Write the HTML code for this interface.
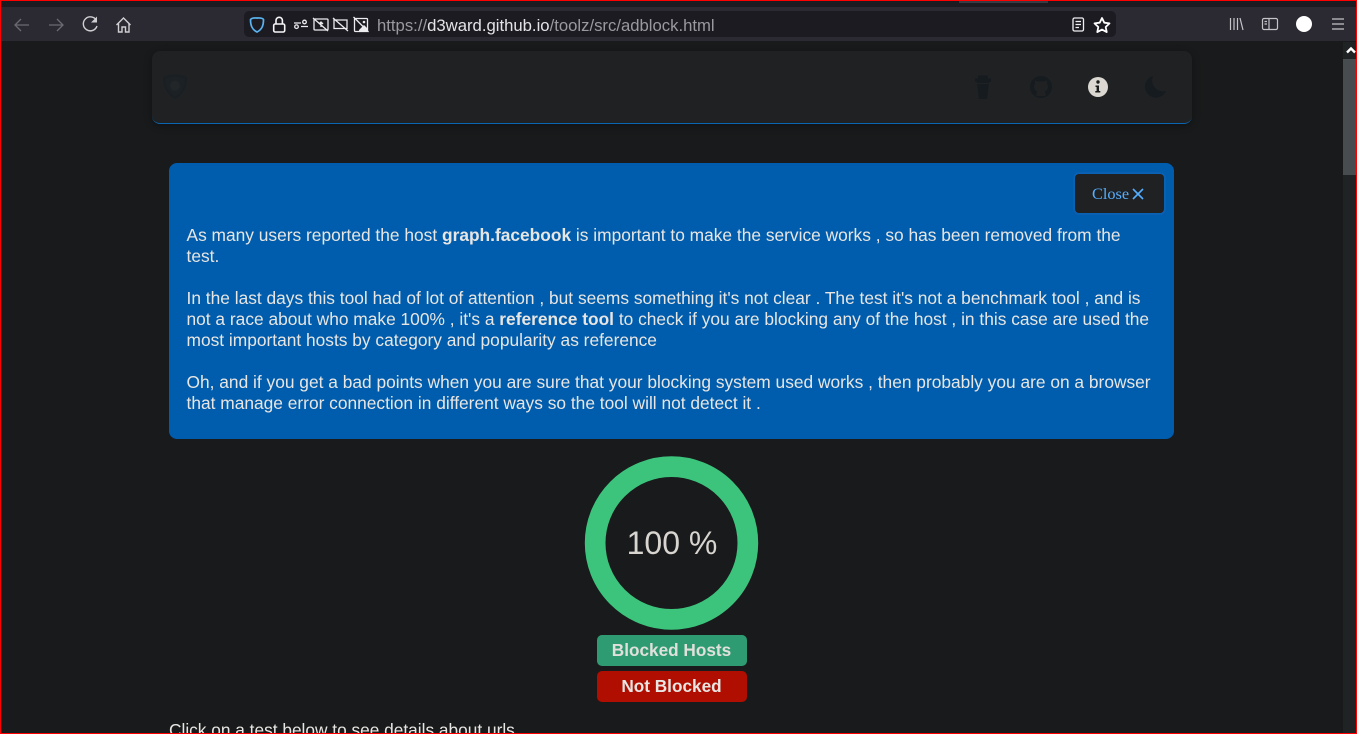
<!DOCTYPE html>
<html><head><meta charset="utf-8"><style>
*{box-sizing:border-box}
html,body{margin:0;padding:0;width:1357px;height:734px;overflow:hidden;background:#181a1b;font-family:"Liberation Sans",sans-serif;color:#e8e6e3}
#w{position:relative;width:1357px;height:734px;overflow:hidden;background:#181a1b}
.a{position:absolute}
svg{position:absolute;overflow:visible;fill:none}
p{margin:0;white-space:nowrap}
</style></head><body><div id="w">
<div class="a" style="left:0;top:0;width:1357px;height:7px;background:#1c1b22"></div>
<div class="a" style="left:959px;top:0;width:89px;height:3px;background:#3a3a44"></div>
<div class="a" style="left:0;top:7px;width:1357px;height:34px;background:#2b2a33"></div>
<div class="a" style="left:244px;top:11px;width:872px;height:26px;background:#1c1b22;border-radius:5px"></div>
<div class="a" style="left:377px;top:17px;font-size:16.7px;line-height:18px;color:#9a99a0;white-space:nowrap">https://<span style="color:#e4e4e6">d3ward.github.io</span>/toolz/src/adblock.html</div>

<svg style="left:0;top:0" width="1357" height="50">
<g stroke="#6b6a71" stroke-width="1.3"><path d="M29 25H15M21 19l-6 6 6 6"/><path d="M49 25h14M57 19l6 6-6 6"/></g>
<g stroke="#d0d0d3" stroke-width="1.4"><path d="M96.500 20.500A7 7 0 1 0 97 26"/><path d="M97 16.500v6h-6z" fill="#d0d0d3" stroke="none"/><path d="M116.500 25l7-7 7 7M118.500 23.500V32h3.500v-5h3.500v5h3.500v-8.500"/></g>
<path d="M257 18c2 0 5-.5 6.500 1.500 0 6-1.500 10-6.500 12.500-5-2.500-6.500-6.500-6.500-12.500C252 17.500 255 18 257 18z" stroke="#5ab4f0" stroke-width="1.7"/>
<g stroke="#f6f6f7" stroke-width="1.6"><rect x="273.700" y="24" width="11" height="8" rx="1.500"/><path d="M276 24v-3.500a3.200 3.200 0 0 1 6.400 0V24"/></g>
<g stroke="#ececee" stroke-width="1.300"><path d="M294 23h7M301 26.500h7"/><circle cx="304.500" cy="22" r="1.800"/><circle cx="296.500" cy="26.700" r="1.800"/>
<rect x="314" y="19" width="14" height="11" rx="1"/><path d="M313 18l15 13M321 22v5M319 24l2-2 2 2"/>
<path d="M334 20h13v8.500h-13zM333 18l15 13"/>
<rect x="354.500" y="18.500" width="13" height="13" rx="1"/><path d="M353.500 17l15 15"/><path d="M359 30l5-5 3 3v3h-8z" fill="#ececee" stroke="none"/><circle cx="364" cy="22" r="1.300" fill="#ececee" stroke="none"/></g>
<g stroke="#f0f0f1" stroke-width="1.300"><rect x="1073" y="18" width="10.500" height="13" rx="1.500"/><path d="M1075.500 21.500h5.500M1075.500 24.500h5.500M1075.500 27.500h3.500"/></g>
<path d="M1102 18l2.300 4.700 5.200.7-3.800 3.600 1 5.100-4.700-2.500-4.700 2.500 1-5.100-3.800-3.600 5.200-.7z" stroke="#fff" stroke-width="1.800" stroke-linejoin="round"/>
<g stroke="#c4c4c8" stroke-width="1.200"><path d="M1230.500 18v12M1234 18v12M1237.500 18v12M1240 18l3 12"/><rect x="1262.500" y="18.500" width="15" height="11" rx="1.500"/><path d="M1269 18.500v11M1264.500 21.500h2.500M1264.500 24h2.500"/><path d="M1332 19h12M1332 24h12M1332 29h12" stroke-width="1.300"/></g>
<circle cx="1304" cy="24" r="8" fill="#fff"/>
</svg>

<!-- scrollbar -->
<div class="a" style="left:1343px;top:42px;width:13px;height:692px;background:#202324"></div>
<div class="a" style="left:1343px;top:59px;width:13px;height:116px;background:#474c4f"></div>
<svg style="left:1343px;top:42px" width="13" height="17"><path d="M4 10.500l4-4 4 4" stroke="#fff" stroke-width="2.400"/></svg>

<!-- nav -->
<div class="a" style="left:152px;top:51px;width:1040px;height:73px;background:#1f2123;border-radius:8px;border-bottom:1px solid #0a66b0;box-shadow:0 2px 8px rgba(0,0,0,.3)"></div>
<svg style="left:0;top:0" width="1357" height="130">
<path d="M175 75.500C179 75.500 183 76.500 186 78 186 86 183 93 175 98 167 93 164 86 164 78 167 76.500 171 75.500 175 75.500z" stroke="#1a1f24" stroke-width="2" fill="#1c2125"/><circle cx="175" cy="85.700" r="5" fill="#232629"/>
<path d="M978 75.500h10v3h-10zM975 78.500h16v3.500h-16zM977 82h12l-1.800 17h-8.400z" fill="#161b20"/><path d="M977.500 83.500h11" stroke="#1f2123" stroke-width="1"/>
<circle cx="1041" cy="87" r="11" fill="#161b20"/><path d="M1036.500 96c0-2.500 0-3.500 1-4.500-2-.5-3.500-2-3.500-5 0-1.200.5-2.200 1-3-.2-1-.2-2 .3-3 1.300 0 2.200.8 2.900 1.300a9 9 0 0 1 5.600 0c.7-.5 1.600-1.300 2.900-1.300.5 1 .5 2 .3 3 .5.800 1 1.800 1 3 0 3-1.500 4.500-3.500 5 1 1 1 2 1 4.500z" fill="#1f2123"/>
<circle cx="1098" cy="87" r="10" fill="#dbd8d2"/><circle cx="1098" cy="82" r="1.700" fill="#181a1b"/><path d="M1095.500 85.500h3.500v5.500h1.300v1.500h-5v-1.500h1.300v-4h-1.100z" fill="#181a1b"/>
<path d="M1153 76A11 11 0 1 0 1166 91 11 11 0 0 1 1153 76z" fill="#161b20"/>
</svg>

<!-- alert -->
<div class="a" style="left:169px;top:163px;width:1005px;height:276px;background:#005cad;border-radius:8px"></div>
<div class="a" style="left:1074px;top:173px;width:91px;height:41px;background:#1f2123;border:1px solid #0a62b5;border-radius:5px;box-shadow:0 0 0 1px #0a5fb0"></div>
<div class="a" style="left:1092px;top:185px;font-family:'Liberation Serif',serif;font-size:16.3px;line-height:18px;color:#55aeff">Close</div>
<svg style="left:1132px;top:188px" width="12" height="12"><path d="M1 1l10 10M11 1L1 11" stroke="#55aeff" stroke-width="1.600"/></svg>
<div class="a" style="left:186.5px;top:225px;font-size:17.35px;line-height:21px;color:#e8e6e3">
<p>As many users reported the host <b>graph.facebook</b> is important to make the service works , so has been removed from the</p>
<p>test.</p>
<p>&nbsp;</p>
<p>In the last days this tool had of lot of attention , but seems something it's not clear . The test it's not a benchmark tool , and is</p>
<p>not a race about who make 100% , it's a <b>reference tool</b> to check if you are blocking any of the host , in this case are used the</p>
<p>most important hosts by category and popularity as reference</p>
<p>&nbsp;</p>
<p>Oh, and if you get a bad points when you are sure that your blocking system used works , then probably you are on a browser</p>
<p>that manage error connection in different ways so the tool will not detect it .</p>
</div>

<!-- ring -->
<svg style="left:585px;top:456px" width="173" height="174"><circle cx="86.500" cy="87" r="76.350" stroke="#3cc47c" stroke-width="20.700"/></svg>
<div class="a" style="left:585px;top:523px;width:174px;text-align:center;font-size:32px;line-height:40px;color:#d8d5d0">100 %</div>

<div class="a" style="left:597px;top:635px;width:149px;height:31px;padding-top:1px;background:#2f9b72;border-radius:5px;text-align:center;font-weight:bold;font-size:17.2px;line-height:29px;color:#e0e0dc;box-shadow:1px 0 0 #2f9b72">Blocked Hosts</div>
<div class="a" style="left:597px;top:671px;width:150px;height:31px;padding:1px 1px 0 0;background:#af0e00;border-radius:5px;text-align:center;font-weight:bold;font-size:17.2px;line-height:29px;color:#e8e6e3">Not Blocked</div>
<div class="a" style="left:169px;top:720px;font-size:17.3px;line-height:21px;color:#e8e6e3;white-space:nowrap">Click on a test below to see details about urls</div>

<!-- red frame -->
<div class="a" style="left:0;top:0;width:1357px;height:1px;background:#f00"></div>
<div class="a" style="left:0;top:733px;width:1357px;height:1px;background:#f00"></div>
<div class="a" style="left:0;top:0;width:1px;height:734px;background:#f00"></div>
<div class="a" style="left:1356px;top:0;width:1px;height:734px;background:#f00"></div>
</div></body></html>
